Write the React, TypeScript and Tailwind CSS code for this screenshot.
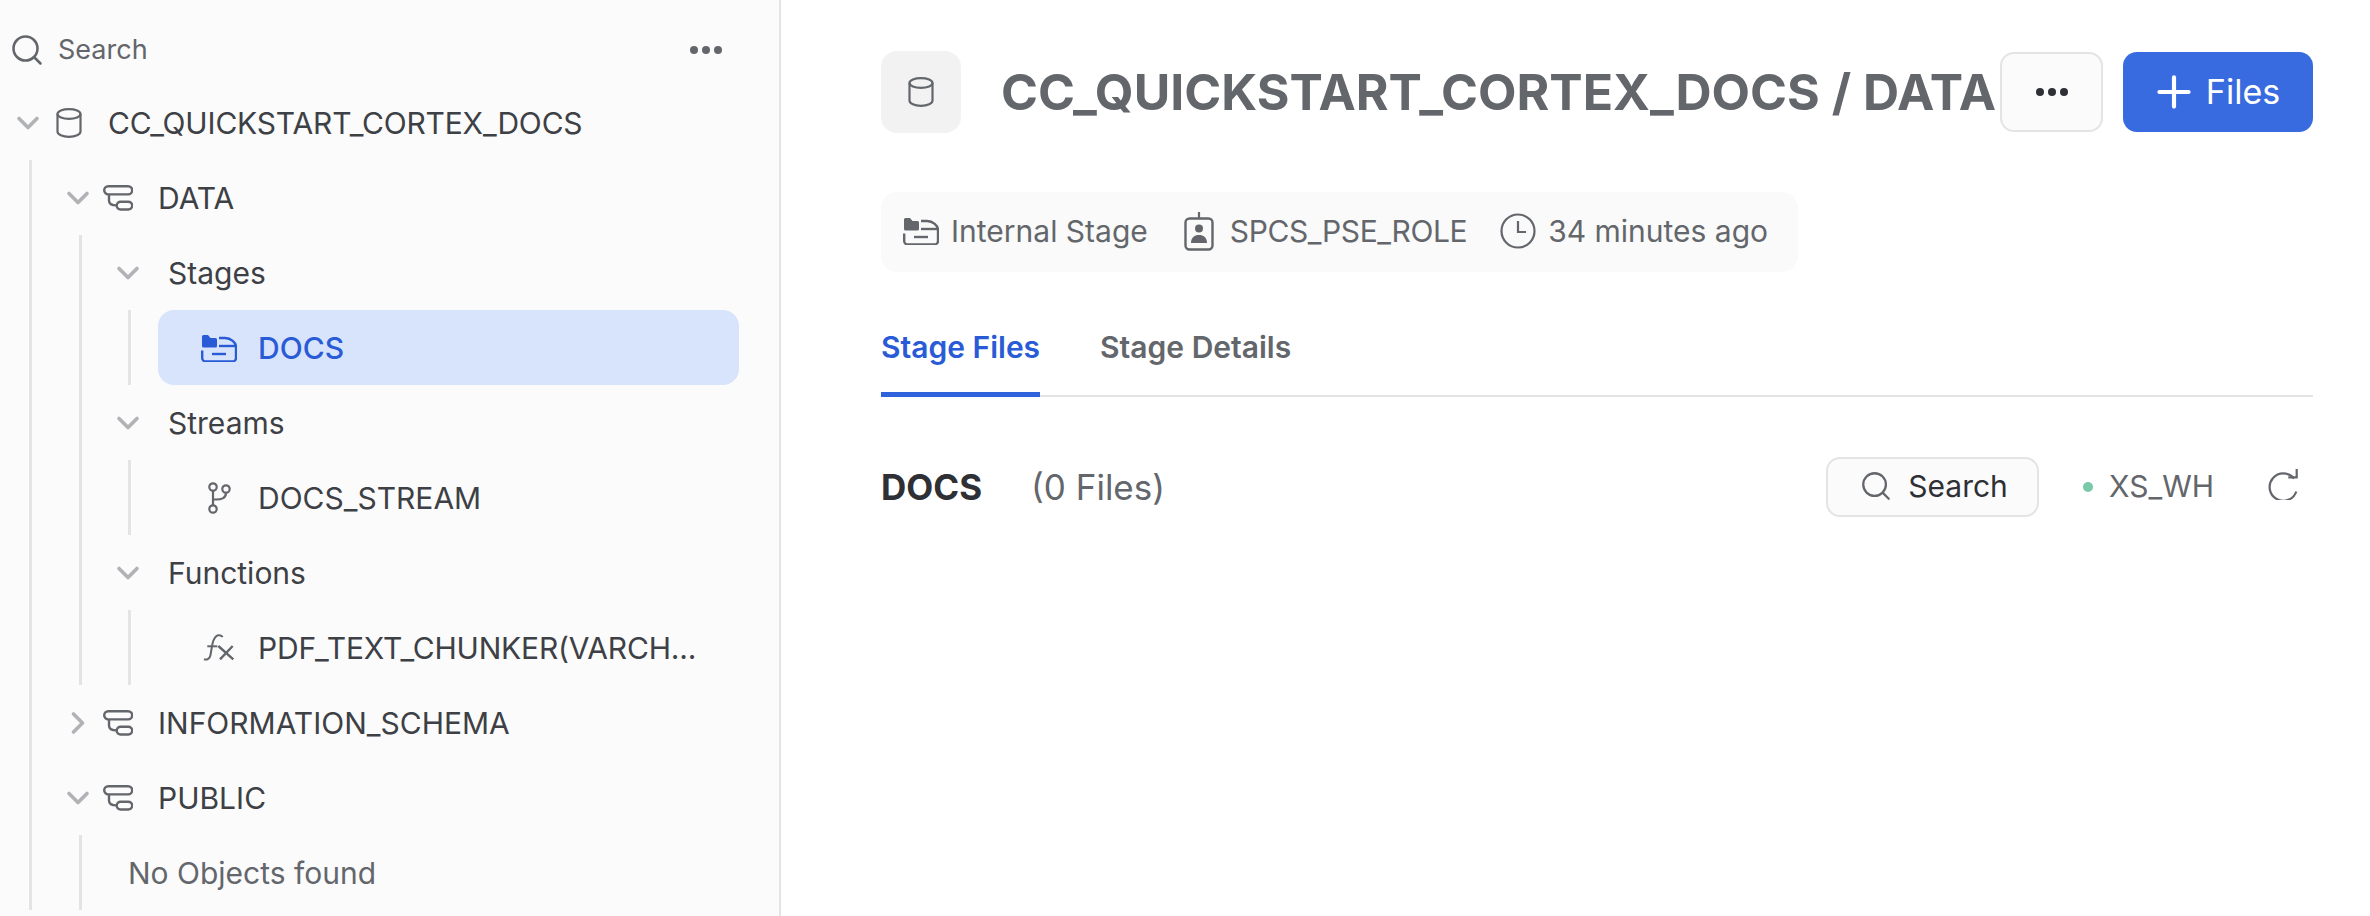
import React from 'react';
import { ChevronDown, ChevronRight, Search, Plus } from 'lucide-react';

const inter = { fontFamily: '"Inter", "Liberation Sans", sans-serif' };

function Cylinder({ className }: { className?: string }) {
  return (
    <svg viewBox="0 0 26 30" fill="none" stroke="currentColor" strokeWidth="2.2" className={className}>
      <ellipse cx="13" cy="6" rx="11.500" ry="4.800" />
      <path d="M1.500 6v17.500c0 3 5 5.300 11.500 5.300s11.500-2.300 11.500-5.300V6" />
    </svg>
  );
}

function SchemaIcon() {
  return (
    <svg viewBox="0 0 30 26" fill="none" stroke="currentColor" strokeWidth="2.4" className="h-[26px] w-[30px] shrink-0 text-[#63666b]">
      <rect x="1.200" y="1.200" width="28" height="8.200" rx="4.100" />
      <rect x="13.700" y="16.700" width="15.500" height="7.800" rx="3.900" />
      <path d="M6 9.400v6c0 3 2 5 7.700 5" />
    </svg>
  );
}

function StageIcon({ className }: { className?: string }) {
  return (
    <svg viewBox="0 0 36 28" fill="none" className={className}>
      <path d="M1 2.500A1.500 1.500 0 0 1 2.500 1h4.500l2.500 3h5a1.500 1.500 0 0 1 1.500 1.500V12a1.500 1.500 0 0 1-1.500 1.500h-12A1.500 1.500 0 0 1 1 12z" fill="currentColor" />
      <path d="M18 4h6c6 0 11 4.500 11 9v11a3.500 3.500 0 0 1-3.500 3.500H4.700A3.500 3.500 0 0 1 1.200 24v-7.500" stroke="currentColor" strokeWidth="2.400" />
      <path d="M18 12h17" stroke="currentColor" strokeWidth="2.400" />
      <path d="M11 20h14" stroke="currentColor" strokeWidth="2.400" />
    </svg>
  );
}

function StreamIcon() {
  return (
    <svg viewBox="0 0 24 32" fill="none" stroke="currentColor" strokeWidth="2.200" className="ml-[2px] h-[32px] w-[24px] text-[#63666b]">
      <circle cx="5" cy="5" r="3.700" />
      <circle cx="18" cy="7" r="3.700" />
      <circle cx="5" cy="27" r="3.700" />
      <path d="M5 8.700v14.600M5 17.500h3c6 0 10-1.500 10-6.800" />
    </svg>
  );
}

function FxIcon() {
  return (
    <svg viewBox="0 0 32 30" fill="none" stroke="currentColor" strokeWidth="2" className="h-[30px] w-[32px] text-[#63666b]">
      <path d="M19.700 4c-1.500-2-4.700-2.400-6.500-.8-2.200 2-3.500 5.800-4.200 9.800L7.500 22c-.6 3.500-3.500 5.300-6.500 4.300" />
      <path d="M4.300 13.300h10" />
      <path d="M15.300 13l15 13.300M29.700 13L17 26.300" strokeWidth="2.400" />
    </svg>
  );
}

function Badge() {
  return (
    <svg viewBox="0 0 30 39" fill="none" className="h-[39px] w-[30px] shrink-0 text-[#63666b]">
      <path d="M15 0v7" stroke="currentColor" strokeWidth="2.200" />
      <rect x="1.500" y="6.500" width="27" height="31" rx="4" stroke="currentColor" strokeWidth="2.400" />
      <circle cx="15" cy="16.500" r="4" fill="currentColor" />
      <path d="M7 31c0-5.500 3.500-8 8-8s8 2.500 8 8z" fill="currentColor" />
    </svg>
  );
}

function Clock() {
  return (
    <svg viewBox="0 0 36 36" fill="none" stroke="currentColor" strokeWidth="2.200" className="h-[36px] w-[36px] shrink-0 text-[#63666b]">
      <circle cx="18" cy="18" r="16.500" />
      <path d="M18 8v11h8" />
    </svg>
  );
}

function Refresh() {
  return (
    <svg viewBox="0 0 32 32" fill="none" stroke="currentColor" strokeWidth="2.200" className="mb-[6px] ml-[54px] mr-[13px] h-[32px] w-[32px] shrink-0 text-[#63666b]">
      <path d="M26 10.500A13.700 13.700 0 1 0 28.300 23.500" />
      <path d="M28.700 1v8.300h-8.400" />
    </svg>
  );
}

function Dots({ className }: { className?: string }) {
  return (
    <div className={`flex gap-[4px] ${className ?? ''}`}>
      <span className="h-[8px] w-[8px] rounded-full bg-current" />
      <span className="h-[8px] w-[8px] rounded-full bg-current" />
      <span className="h-[8px] w-[8px] rounded-full bg-current" />
    </div>
  );
}

function Chevron({ open = true }: { open?: boolean }) {
  const Icon = open ? ChevronDown : ChevronRight;
  return <Icon size={36} strokeWidth={2.400} className="shrink-0 text-[#b0b2b6]" />;
}

function SchemaRow({ label, open = true }: { label: string; open?: boolean }) {
  return (
    <div className="flex h-[75px] items-center text-[#3d4045]">
      <div className="ml-[32px] flex w-[28px] justify-center">
        <Chevron open={open} />
      </div>
      <div className="ml-[11px]">
        <SchemaIcon />
      </div>
      <span className="ml-[25px]">{label}</span>
    </div>
  );
}

function GroupRow({ label }: { label: string }) {
  return (
    <div className="flex h-[75px] items-center text-[#3d4045]">
      <div className="ml-[30px] flex w-[32px] justify-center">
        <Chevron />
      </div>
      <span className="ml-[24px]">{label}</span>
    </div>
  );
}

function LeafRow({ label, icon, selected, tight }: { label: string; icon: React.ReactNode; selected?: boolean; tight?: boolean }) {
  return (
    <div className="ml-[27px] flex h-[75px] items-center rounded-[16px] pl-[37px] pr-[16px] text-[#3d4045] data-[on=true]:bg-[#d8e4fc] data-[on=true]:font-medium data-[on=true]:text-[#2a5bd7]" data-on={selected ? 'true' : 'false'}>
      <div className="flex w-[63px] shrink-0 items-center justify-center pr-[16px]">{icon}</div>
      <span className={tight ? 'whitespace-nowrap tracking-[-0.18px]' : 'whitespace-nowrap'}>{label}</span>
    </div>
  );
}

export default function App() {
  return (
    <div className="flex h-[916px] w-[2370px] overflow-hidden bg-white text-[30px] leading-none" style={inter}>
      <aside className="h-full w-[781px] shrink-0 border-r-[2px] border-[#e4e4e4] bg-[#fbfbfb] pr-[40px] pt-[14px]">
        <div className="flex h-[71px] items-center text-[#63666b]">
          <Search size={36} strokeWidth={1.700} className="ml-[9px]" />
          <span className="ml-[13px] text-[27px]">Search</span>
          <Dots className="ml-auto mr-[17px] text-[#63666b]" />
        </div>

        <div className="flex h-[75px] items-center text-[#3d4045]">
          <div className="flex w-[56px] justify-center">
            <Chevron />
          </div>
          <Cylinder className="h-[30px] w-[26px] shrink-0 text-[#63666b]" />
          <span className="ml-[26px] tracking-[-0.18px]">CC_QUICKSTART_CORTEX_DOCS</span>
        </div>

        <div className="ml-[29px] border-l-[3px] border-[#e4e4e4]">
          <SchemaRow label="DATA" />
          <div className="ml-[47px] border-l-[3px] border-[#e4e4e4]">
            <GroupRow label="Stages" />
            <div className="ml-[46px] border-l-[3px] border-[#e4e4e4]">
              <LeafRow label="DOCS" selected icon={<StageIcon className="h-[28px] w-[36px]" />} />
            </div>
            <GroupRow label="Streams" />
            <div className="ml-[46px] border-l-[3px] border-[#e4e4e4]">
              <LeafRow label="DOCS_STREAM" icon={<StreamIcon />} />
            </div>
            <GroupRow label="Functions" />
            <div className="ml-[46px] border-l-[3px] border-[#e4e4e4]">
              <LeafRow label="PDF_TEXT_CHUNKER(VARCH..." tight icon={<FxIcon />} />
            </div>
          </div>
          <SchemaRow label="INFORMATION_SCHEMA" open={false} />
          <SchemaRow label="PUBLIC" />
          <div className="ml-[47px] flex h-[75px] items-center border-l-[3px] border-[#e4e4e4] pl-[46px] text-[#63666b]">
            No Objects found
          </div>
        </div>
      </aside>

      <main className="min-w-0 flex-1 pl-[100px] pr-[57px] pt-[51px]">
        <div className="flex h-[82px] items-center">
          <div className="flex h-[82px] w-[80px] shrink-0 items-center justify-center rounded-[16px] bg-[#f2f2f2]">
            <Cylinder className="h-[30px] w-[26px] text-[#63666b]" />
          </div>
          <h1 className="ml-[40px] whitespace-nowrap text-[50px] font-bold text-[#63666b]">CC_QUICKSTART_CORTEX_DOCS / DATA</h1>
          <button className="ml-auto flex h-[80px] w-[103px] items-center justify-center rounded-[14px] border-[2px] border-[#e4e4e4] bg-[#fbfbfb] text-[#2e3035]">
            <Dots />
          </button>
          <button className="ml-[20px] flex h-[80px] w-[190px] items-center justify-center gap-[7px] rounded-[14px] bg-[#386bdf] pr-[7px] text-[34px] text-white">
            <Plus size={50} strokeWidth={2} />
            Files
          </button>
        </div>

        <div className="mt-[59px] flex h-[80px] w-fit items-center rounded-[16px] bg-[#fafafa] pb-[2px] pl-[22px] pr-[30px] text-[#63666b]">
          <StageIcon className="h-[28px] w-[36px] shrink-0" />
          <span className="ml-[12px]">Internal Stage</span>
          <div className="ml-[36px]">
            <Badge />
          </div>
          <span className="ml-[16px] tracking-[-0.4px]">SPCS_PSE_ROLE</span>
          <div className="ml-[33px]">
            <Clock />
          </div>
          <span className="ml-[12px]">34 minutes ago</span>
        </div>

        <div className="mt-[33px] flex h-[92px] gap-[60px] border-b-[2px] border-[#e4e4e4] text-[30px] font-semibold">
          <div className="-mb-[2px] flex items-center border-b-[5px] border-[#2f63dc] pb-[3px] text-[#2a5bd7]">Stage Files</div>
          <div className="flex items-center pb-[6px] text-[#63666b]">Stage Details</div>
        </div>

        <div className="mt-[60px] flex h-[60px] items-center">
          <span className="text-[35px] font-bold text-[#2e3035]">DOCS</span>
          <span className="ml-[49px] text-[35px] text-[#63666b]">(0 Files)</span>
          <button className="ml-auto flex h-[60px] w-[213px] items-center justify-center gap-[15px] rounded-[14px] border-[2px] border-[#e4e4e4] bg-[#fbfbfb] pb-[2px] pl-[2px] text-[#2e3035]">
            <Search size={34} strokeWidth={1.600} className="text-[#63666b]" />
            Search
          </button>
          <span className="ml-[44px] h-[10px] w-[10px] rounded-full bg-[#78c9a9]" />
          <span className="ml-[16px] pb-[2px] text-[#63666b]">XS_WH</span>
          <Refresh />
        </div>
      </main>
    </div>
  );
}
